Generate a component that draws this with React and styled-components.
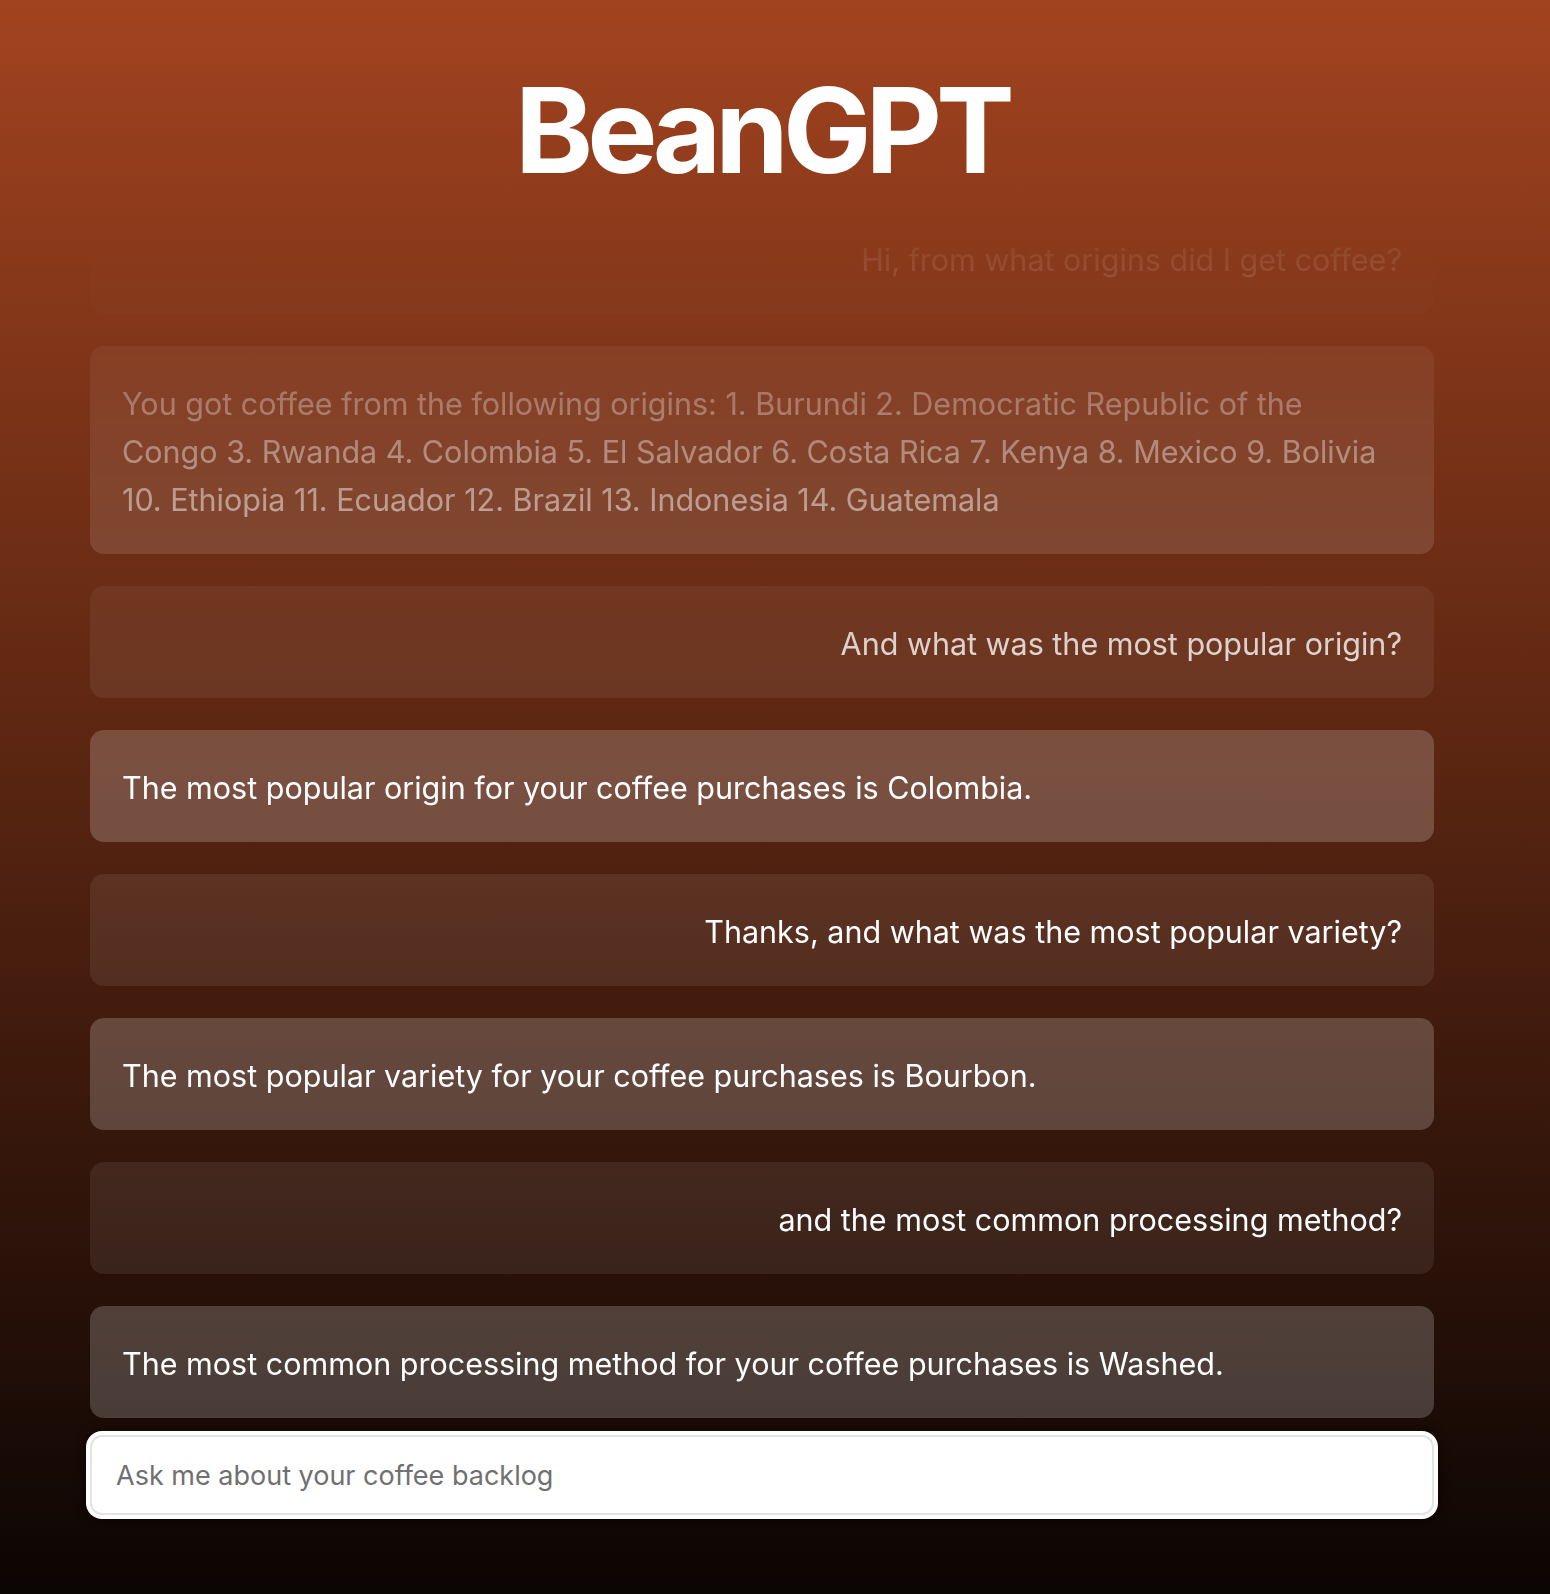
import React from "react";
import styled, { createGlobalStyle } from "styled-components";

const GlobalStyle = createGlobalStyle`
  html, body {
    margin: 0;
    padding: 0;
  }
  body {
    font-family: Inter, "Noto Sans", "Liberation Sans", sans-serif;
    background: #0b0503;
  }
  * {
    box-sizing: border-box;
  }
`;

const Page = styled.div`
  min-height: 100vh;
  background: linear-gradient(to bottom, #a2431f 0%, #0b0503 100%);
  padding: 71px 116px 0 90px;
  display: flex;
  flex-direction: column;
`;

const Title = styled.h1`
  margin: 0;
  font-size: 118px;
  line-height: 118px;
  font-weight: 700;
  letter-spacing: -0.05em;
  color: #fff;
  text-align: center;
`;

const ChatList = styled.div`
  display: flex;
  flex-direction: column;
  gap: 32px;
  padding-top: 13px;
  -webkit-mask-image: linear-gradient(to bottom, transparent 0px, transparent 20px, #000 575px);
  mask-image: linear-gradient(to bottom, transparent 0px, transparent 20px, #000 575px);
`;

const Bubble = styled.div`
  padding: 34px 32px 30px;
  border-radius: 14px;
  font-size: 30.5px;
  line-height: 48px;
  color: #fff;
  text-align: ${(p) => (p.$user ? "right" : "left")};
  background: ${(p) => (p.$user ? "rgba(255, 255, 255, 0.08)" : "rgba(255, 255, 255, 0.2)")};
`;

const InputWrap = styled.div`
  margin-top: 17px;
`;

const Input = styled.input`
  width: 100%;
  height: 80px;
  border: 2px solid #e3e3e3;
  border-radius: 12px;
  background: #fff;
  padding: 0 24px;
  font-family: inherit;
  font-size: 27px;
  color: #222;
  outline: none;
  box-shadow: 0 0 0 4px #fff, 0 0 10px 5px rgba(0, 0, 0, 0.55);

  &::placeholder {
    color: #707070;
  }
`;

const messages = [
  { user: true, text: "Hi, from what origins did I get coffee?" },
  {
    user: false,
    text: "You got coffee from the following origins: 1. Burundi 2. Democratic Republic of the Congo 3. Rwanda 4. Colombia 5. El Salvador 6. Costa Rica 7. Kenya 8. Mexico 9. Bolivia 10. Ethiopia 11. Ecuador 12. Brazil 13. Indonesia 14. Guatemala",
  },
  { user: true, text: "And what was the most popular origin?" },
  { user: false, text: "The most popular origin for your coffee purchases is Colombia." },
  { user: true, text: "Thanks, and what was the most popular variety?" },
  { user: false, text: "The most popular variety for your coffee purchases is Bourbon." },
  { user: true, text: "and the most common processing method?" },
  { user: false, text: "The most common processing method for your coffee purchases is Washed." },
];

const App = () => {
  return (
    <>
      <GlobalStyle />
      <Page>
        <Title>BeanGPT</Title>
        <ChatList>
          {messages.map((m, i) => (
            <Bubble key={i} $user={m.user}>
              {m.text}
            </Bubble>
          ))}
        </ChatList>
        <InputWrap>
          <Input placeholder={"Ask me about your coffee backlog"} />
        </InputWrap>
      </Page>
    </>
  );
};

export default App;
